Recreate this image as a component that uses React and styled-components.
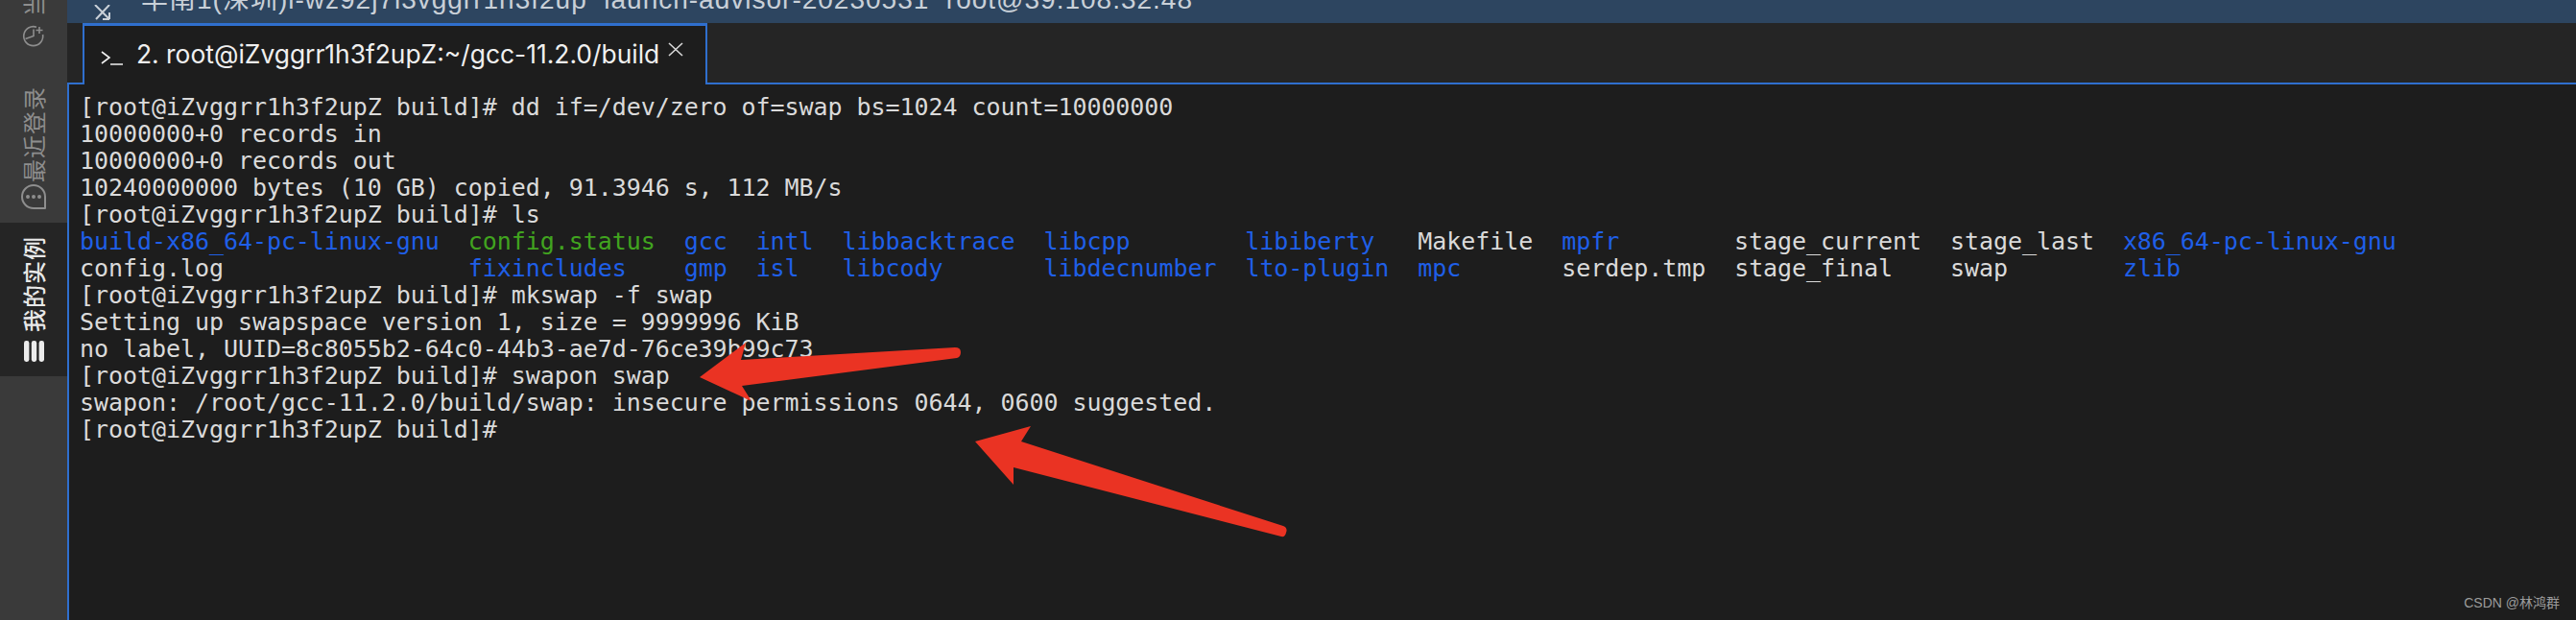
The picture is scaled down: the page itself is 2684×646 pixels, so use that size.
import React from "react";
import styled, { createGlobalStyle } from "styled-components";

/* ---------------- GLOBAL ---------------- */
const GlobalStyle = createGlobalStyle`
  html, body {
    margin: 0;
    height: 100%;
    background: #1d1d1d;
    overflow: hidden;
  }
`;

/* ---------------- LAYOUT ---------------- */
const Page = styled.div`
  position: relative;
  display: grid;
  grid-template-columns: 70px 1fr;
  height: 100vh;
  overflow: hidden;
`;

const Sidebar = styled.aside`
  display: flex;
  flex-direction: column;
  background: #3a3a3a;
  overflow: hidden;
`;

const SideItem = styled.div`
  display: flex;
  flex-direction: column;
  align-items: center;
  gap: ${({ $gap }) => $gap}px;
  height: ${({ $height }) => $height}px;
  padding-top: ${({ $top }) => $top || 0}px;
  box-sizing: border-box;
  flex: none;
  background: ${({ $active }) => ($active ? "#252525" : "transparent")};
  color: ${({ $active }) => ($active ? "#e8e8e8" : "#8e8e8e")};
`;

const SideLabel = styled.span`
  writing-mode: vertical-rl;
  text-orientation: sideways;
  transform: rotate(180deg);
  font: ${({ $active }) => ($active ? 500 : 400)} 24px/30px "Noto Sans CJK SC", sans-serif;
  letter-spacing: 1px;
  margin-top: ${({ $shift }) => $shift || 0}px;
`;

const Main = styled.main`
  display: flex;
  flex-direction: column;
  min-width: 0;
`;

const TitleBar = styled.div`
  display: flex;
  align-items: flex-end;
  gap: 30px;
  height: 24px;
  padding: 0 0 10px 27px;
  box-sizing: border-box;
  background: #2d4560;
  color: #c9d0d8;
  overflow: hidden;
  flex: none;
`;

const TitleText = styled.span`
  font: 28px/28px "Liberation Sans", "Noto Sans CJK SC", sans-serif;
  letter-spacing: 1px;
  white-space: pre;
`;

const TabStrip = styled.div`
  display: flex;
  height: 64px;
  padding-left: 16px;
  box-sizing: border-box;
  background: #252525;
  border-bottom: 2px solid #2f6fce;
  flex: none;
`;

const Tab = styled.div`
  display: flex;
  align-items: flex-start;
  width: 651px;
  height: 64px;
  box-sizing: border-box;
  padding: 17px 0 0 17px;
  background: #1d1d1d;
  border: solid #2f6fce;
  border-width: 3px 2px 0 2px;
  color: #f0f0f0;
`;

const TabTitle = styled.span`
  margin: -4px 0 0 13px;
  font: 26.4px/32px Inter, "Liberation Sans", sans-serif;
  white-space: pre;
`;

const Terminal = styled.pre`
  flex: 1;
  margin: 0;
  padding: 10px 0 0 11px;
  border-left: 2px solid #2f6fce;
  background: #1d1d1d;
  color: #dadada;
  font: 25px/28px "DejaVu Sans Mono", monospace;
  letter-spacing: -0.06px;
`;

const Cell = styled.span`
  color: ${({ $kind }) =>
    $kind === "dir" ? "#1f5fe8" : $kind === "exec" ? "#41a41f" : "inherit"};
`;

const Arrows = styled.svg`
  position: absolute;
  inset: 0;
  width: 100%;
  height: 100%;
  pointer-events: none;
`;

const Watermark = styled.span`
  position: absolute;
  right: 17px;
  bottom: 9px;
  color: #9c9c9c;
  font: 14px/18px "Liberation Sans", "Noto Sans CJK SC", sans-serif;
`;

/* ---------------- DATA ---------------- */
const PROMPT = "[root@iZvggrr1h3f2upZ build]#";

const LS_ROWS = [
  [
    ["build-x86_64-pc-linux-gnu", 27, "dir"],
    ["config.status", 15, "exec"],
    ["gcc", 5, "dir"],
    ["intl", 6, "dir"],
    ["libbacktrace", 14, "dir"],
    ["libcpp", 14, "dir"],
    ["libiberty", 12, "dir"],
    ["Makefile", 10],
    ["mpfr", 12, "dir"],
    ["stage_current", 15],
    ["stage_last", 12],
    ["x86_64-pc-linux-gnu", 19, "dir"],
  ],
  [
    ["config.log", 27],
    ["fixincludes", 15, "dir"],
    ["gmp", 5, "dir"],
    ["isl", 6, "dir"],
    ["libcody", 14, "dir"],
    ["libdecnumber", 14, "dir"],
    ["lto-plugin", 12, "dir"],
    ["mpc", 10, "dir"],
    ["serdep.tmp", 12],
    ["stage_final", 15],
    ["swap", 12],
    ["zlib", 19, "dir"],
  ],
];

/* ---------------- ICONS ---------------- */
const ResizeIcon = () => (
  <svg width="20" height="16" viewBox="0 0 20 16" fill="none" stroke="#c9d0d8" strokeWidth="2" style={{ flex: "none", marginBottom: -7 }}>
    <path d="M2 0l15 15M17 15V8M17 15h-7M17 0L3 15" />
  </svg>
);

const TimerIcon = () => (
  <svg width="24" height="24" viewBox="0 0 24 24" fill="none" stroke="#8e8e8e" strokeWidth="1.6">
    <path d="M15 3.2A10 10 0 1 0 21.6 11" />
    <path d="M3.5 15.5l8.5-3V5.5M18 3v7M14.5 6.5h7" />
  </svg>
);

const ChatIcon = () => (
  <svg width="26" height="26" viewBox="0 0 26 26" fill="none" stroke="#8e8e8e" strokeWidth="2">
    <path d="M25 25h-12A12 12 0 1 1 25 13z" strokeLinejoin="round" />
    <circle cx="7" cy="13" r="1" fill="#8e8e8e" />
    <circle cx="13" cy="13" r="1" fill="#8e8e8e" />
    <circle cx="19" cy="13" r="1" fill="#8e8e8e" />
  </svg>
);

const ListIcon = () => (
  <svg width="21" height="22" viewBox="0 0 21 22" fill="#ececec">
    <rect x="0" y="0" width="5.4" height="22" rx="2.4" />
    <rect x="7.8" y="0" width="5.4" height="22" rx="2.4" />
    <rect x="15.6" y="0" width="5.4" height="22" rx="2.4" />
  </svg>
);

const PromptIcon = () => (
  <svg width="24" height="16" viewBox="0 0 24 16" fill="none" stroke="#f0f0f0" strokeWidth="1.6" style={{ flex: "none", marginTop: 8 }}>
    <path d="M1 2l8 6-8 6M10 15h13" />
  </svg>
);

const CloseIcon = () => (
  <svg width="16" height="15" viewBox="0 0 16 15" fill="none" stroke="#d8d8d8" strokeWidth="1.6" style={{ flex: "none", marginLeft: 9 }}>
    <path d="M1 1l14 13M15 1L1 14" />
  </svg>
);

/* ---------------- COMPONENT ---------------- */
export default function App() {
  return (
    <Page>
      <GlobalStyle />
      <Sidebar>
        <SideItem $height={90} $gap={8}>
          <SideLabel $shift={-8}>当</SideLabel>
          <TimerIcon />
        </SideItem>
        <SideItem $height={142} $gap={2}>
          <SideLabel>最近登录</SideLabel>
          <ChatIcon />
        </SideItem>
        <SideItem $active $height={160} $top={14} $gap={9}>
          <SideLabel $active>我的实例</SideLabel>
          <ListIcon />
        </SideItem>
      </Sidebar>

      <Main>
        <TitleBar>
          <ResizeIcon />
          <TitleText>华南1(深圳)i-wz92j7i3vggrr1h3f2up  launch-advisor-20230531  root@39.108.32.48</TitleText>
        </TitleBar>
        <TabStrip>
          <Tab>
            <PromptIcon />
            <TabTitle>2. root@iZvggrr1h3f2upZ:~/gcc-11.2.0/build</TabTitle>
            <CloseIcon />
          </Tab>
        </TabStrip>
        <Terminal>
          {`${PROMPT} dd if=/dev/zero of=swap bs=1024 count=10000000
10000000+0 records in
10000000+0 records out
10240000000 bytes (10 GB) copied, 91.3946 s, 112 MB/s
${PROMPT} ls
`}
          {LS_ROWS.map((row, i) => (
            <React.Fragment key={i}>
              {row.map(([name, width, kind]) => (
                <React.Fragment key={name}>
                  <Cell $kind={kind}>{name}</Cell>
                  {" ".repeat(width - name.length)}
                </React.Fragment>
              ))}
              {"\n"}
            </React.Fragment>
          ))}
          {`${PROMPT} mkswap -f swap
Setting up swapspace version 1, size = 9999996 KiB
no label, UUID=8c8055b2-64c0-44b3-ae7d-76ce39b99c73
${PROMPT} swapon swap
swapon: /root/gcc-11.2.0/build/swap: insecure permissions 0644, 0600 suggested.
${PROMPT}`}
        </Terminal>
      </Main>

      <Arrows viewBox="0 0 2684 646">
        <path
          fill="#ea3323"
          d="M729 393L777 357L772 375L995 362Q1001 362 1001 367Q1001 372 997 373L773 402L783 418Z"
        />
        <path
          fill="#ea3323"
          d="M1016 460L1074 444L1064 460L1337 548Q1342 550 1340 555Q1339 560 1335 559L1056 487L1056 505Z"
        />
      </Arrows>
      <Watermark>CSDN @林鸿群</Watermark>
    </Page>
  );
}
